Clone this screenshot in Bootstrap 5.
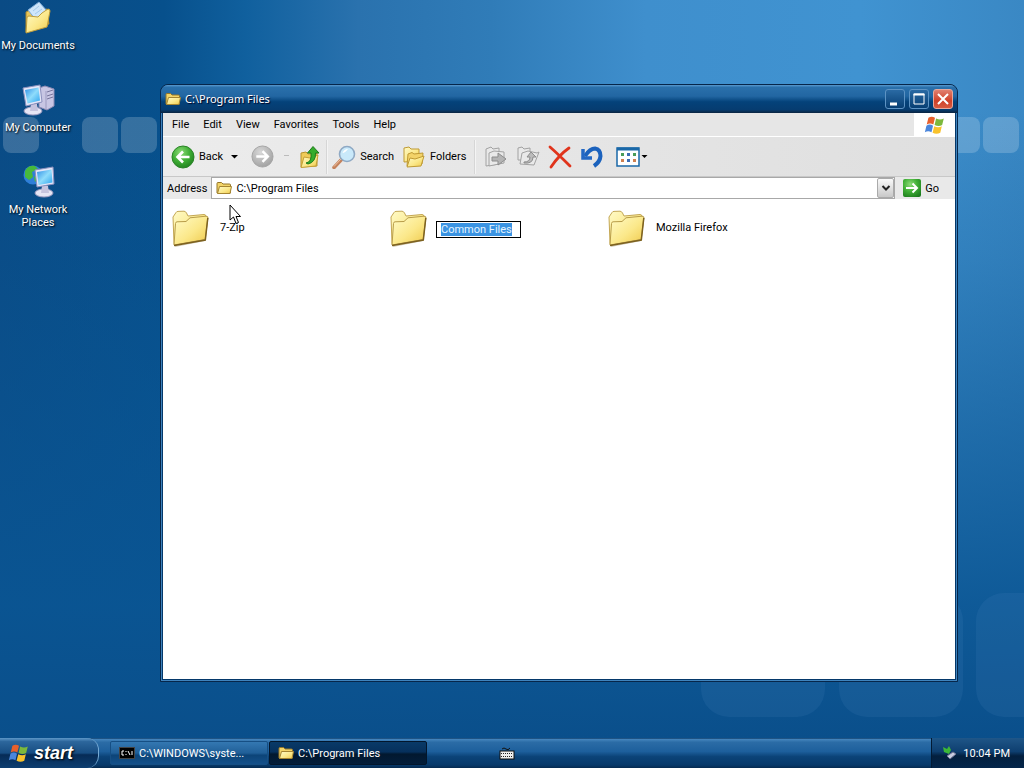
<!DOCTYPE html>
<html lang="en">
<head>
<meta charset="utf-8">
<meta name="viewport" content="width=device-width, initial-scale=1">
<title>C:\Program Files</title>
<link href="https://cdn.jsdelivr.net/npm/bootstrap@5.3.0/dist/css/bootstrap.min.css" rel="stylesheet">
<style>
  body { font: 11px/13px Roboto, "Noto Sans", sans-serif; color: #000; cursor: default; }
  button, input { font: inherit; color: inherit; }
  a { color: inherit; text-decoration: none; }
  svg { display: block; flex: none; }
  .plain { border: 0; background: none; padding: 0; color: inherit; }

  .desktop {
    background:
      linear-gradient(#0a559300 15%, #0a559338 35%, #0a559398 60%, #0a5593e8 82%, #0a4f8b),
      linear-gradient(90deg, #0a4b85, #07508c 16%, #10609e 24%, #2a72ae 35%, #307cb8 48%, #3f8fcd 63%, #4093d1 84%, #3a88c4);
    overflow: hidden;
  }
  .tile { position: absolute; width: 36px; height: 36px; top: 117px; border-radius: 8px; background: #ffffff30; }
  .tile-big { width: 124px; height: 124px; top: auto; bottom: 21px; border-radius: 28px; background: #4a86c028; }
  .shortcuts { width: 76px; position: relative; }
  .shortcut { height: 82px; color: #fff; text-align: center; text-shadow: 1px 1px 2px #000; }
  .shortcut svg { margin-bottom: 4px; }

  .win { position: absolute; left: 160px; top: 84px; right: 66px; bottom: 56px; border-radius: 8px 8px 0 0;
    background: #04386a; border: 1px solid #06264a; padding: 0 2px 2px; box-shadow: inset 0 0 0 1px #3f83bd; }
  .titlebar { height: 28px; margin: 0 -2px; padding: 0 4px; border-radius: 7px 7px 0 0; color: #fff;
    background: linear-gradient(#5a9bd0 0, #2a70ab 8%, #2266a2 40%, #04427a 60%, #063c70 88%, #0a2440); }
  .titlebar h1 { font: 11px/14px "Noto Sans", sans-serif; text-shadow: 1px 1px 1px #002; }
  .capbtn { width: 20px; height: 20px; border: 1px solid #5d93c4; border-radius: 3px; background: linear-gradient(#2a6aa4, #073f74); padding: 0; }
  .capbtn.shut { background: linear-gradient(#e08070, #d04028 60%, #d85a40); border-color: #e8a89c; }
  .menubar { height: 23px; background: #e6e6e6; padding-left: 2px; }
  .menubar a { padding: 0 7px; }
  .flagbox { width: 41px; background: #fff; }
  .toolbar { height: 41px; background: linear-gradient(90deg, #ececec, #dfdfdf); border-top: 1px solid #fff; border-bottom: 1px solid #c8c8c8; }
  .rule { width: 1px; height: 34px; background: #d6d6d6; border-right: 1px solid #f4f4f4; box-sizing: content-box; }
  .addr { height: 22px; background: #e9e9e9; }
  .addrfield { height: 22px; background: #fff; border: 1px solid #a8a8a8; }
  .drop { width: 17px; height: 20px; border: 1px solid #aaa; border-radius: 2px; background: linear-gradient(#fafafa, #c8c8c8); }
  .files { display: grid; grid-template-columns: repeat(auto-fill, 218px); align-content: start; padding: 8px; background: #fff; }
  .files li { height: 44px; gap: 9px; }
  .files span { padding-bottom: 3px; }
  .rename { width: 85px; height: 17px; border: 1px solid #000; border-radius: 0; padding: 0 4px; margin-left: -2px; color: #000; background: #fff; outline: 0; }
  .rename::selection { background: #3a93e2; color: #e4f4ff; }
  .pointer { position: absolute; left: 229px; top: 204px; }

  .taskbar { height: 30px; color: #fff; background: linear-gradient(#03305c 0, #4585bd 4%, #2b6ca6 14%, #1d5f9c 45%, #0b4378 62%, #07396a 90%, #052a50); }
  .start { width: 99px; border-radius: 0 12px 12px 0; border-right: 1px solid #75a9d4; font: italic bold 18px/20px "Liberation Sans", sans-serif;
    background: linear-gradient(#5d97c8 0, #2c669c 12%, #174d82 50%, #062b56 56%, #0d3e70); text-shadow: 1px 1px 2px #000; }
  .tasks { padding-left: 11px; gap: 1px; }
  .task { width: 158px; height: 24px; border: 1px solid #164f84; border-radius: 2px; background: linear-gradient(#3478b2, #205f98 50%, #0c4478 60%, #14508a); padding: 0 8px; }
  .task.on { background: linear-gradient(#093a68, #06305c 45%, #02182f 55%, #031d3a); border-color: #02162c; }
  .tray { width: 93px; padding: 0 14px 0 10px; background: linear-gradient(#1f5688, #0e3f70 45%, #031f3e 60%, #04254a); border-left: 1px solid #021a34; }
</style>
</head>
<body class="d-flex flex-column vh-100 overflow-hidden">
<svg width="0" height="0" class="position-absolute" aria-hidden="true">
  <defs>
    <linearGradient id="gold" x1="0" y1="0" x2="1" y2="1"><stop offset="0" stop-color="#fffbc8"/><stop offset=".55" stop-color="#fbe88a"/><stop offset="1" stop-color="#efc94a"/></linearGradient>
    <linearGradient id="scr" x1="0" y1="0" x2="1" y2="1"><stop offset="0" stop-color="#2f8fe6"/><stop offset=".5" stop-color="#8fdcfb"/><stop offset="1" stop-color="#2ea4ee"/></linearGradient>
    <radialGradient id="green" cx=".4" cy=".3" r=".8"><stop offset="0" stop-color="#8edb78"/><stop offset=".5" stop-color="#3fae35"/><stop offset="1" stop-color="#1c7a1c"/></radialGradient>
    <radialGradient id="grey" cx=".4" cy=".3" r=".8"><stop offset="0" stop-color="#d8d8d8"/><stop offset="1" stop-color="#9c9c9c"/></radialGradient>
    <symbol id="folder" viewBox="0 0 40 40">
      <path d="M3 8 6 3.500 14 3 17 7.500 33 6 37.500 8 34 32 4 38Z" fill="#6b5418" opacity=".3"/>
      <path d="M2 8 5 3.500Q5.500 2.500 7 2.400L13 2.200Q14.500 2.200 15.500 4L17 7 33 5.500Q35 5.500 35 7.500L33 29 4 36Q3 36 3 34Z" fill="url(#gold)" stroke="#c4a754"/>
      <path d="M3 36 4.500 14.500Q4.600 13 6 12.800L15 12.500 19 8.800 35 7.200Q37 7 36.800 9L34.200 30.500Z" fill="url(#gold)" stroke="#b89c48"/>
      <path d="M3 36.500 34.300 31 36.800 9" fill="none" stroke="#7d6220" stroke-width="1.500"/>
    </symbol>
    <symbol id="minifolder" viewBox="0 0 16 14">
      <path d="M1 12V2.500Q1 1.500 2 1.500H5.500L7 3H13.500Q14.500 3 14.500 4V12Z" fill="#f3d468" stroke="#94762a"/>
      <path d="M1.500 12.500 3.500 5.500H15.500L14 12.500Z" fill="url(#gold)" stroke="#a58532"/>
    </symbol>
    <symbol id="flag" viewBox="0 0 20 20">
      <path d="M4 3.500Q7 1.500 10 3.500L8.500 9.500Q5.500 7.600 2.500 9.500Z" fill="#e8602c"/>
      <path d="M11 4Q14.500 6 18 4L16.500 10Q13.500 12 9.600 10Z" fill="#7cb83c"/>
      <path d="M2.200 10.600Q5.200 8.700 8.200 10.600L6.800 16.600Q3.800 14.700.8 16.600Z" fill="#4a86dc"/>
      <path d="M9.300 11.100Q13 13 16.200 11.100L14.800 17.100Q11.400 19 7.800 17.100Z" fill="#f8c22c"/>
    </symbol>
  </defs>
</svg>

<main class="desktop position-relative flex-grow-1">
  <div class="tile" style="left:3px"></div>
  <div class="tile" style="left:82px"></div>
  <div class="tile" style="left:121px"></div>
  <div class="tile" style="right:44px"></div>
  <div class="tile" style="right:5px"></div>
  <div class="tile tile-big" style="right:199px"></div>
  <div class="tile tile-big" style="right:61px"></div>
  <div class="tile tile-big" style="right:-76px"></div>

  <nav class="shortcuts">
    <a href="#" class="shortcut d-flex flex-column align-items-center">
      <svg width="36" height="35" viewBox="0 0 36 35"><path d="M6 32V12L10 10 13 12 27 9 29 24Z" fill="#e9c659" stroke="#a8862e"/><path d="M8 10 19 2 28 12 19 24Z" fill="#cfe6fa" stroke="#7ba9d6"/><path d="M13 11 19 6M15 14 22 9M18 17 26 12" stroke="#a6caea"/><path d="M6 33 7 18Q7 16 9 16L18 17 22 13 28 9Q30 9 30 11L27 27Z" fill="url(#gold)" stroke="#c09e3c"/></svg>
      <span>My Documents</span></a>
    <a href="#" class="shortcut d-flex flex-column align-items-center">
      <svg width="36" height="35" viewBox="0 0 36 35"><path d="M19 6 25 4 34 7V24L27 28 19 25Z" fill="#c8c6e4" stroke="#8c8ab4"/><path d="M27 10 33 8M27 14 33 12M27 17 33 15" stroke="#77749c"/><path d="M26 9V27" stroke="#9c9ac0"/><ellipse cx="13" cy="29" rx="9" ry="4" fill="#e6e5f4" stroke="#9c9abf"/><path d="M11 22H17L18 29H10Z" fill="#c6c4de"/><path d="M3 6 20 3 22 20 6 24Z" fill="#e4e6f8" stroke="#8b90bd"/><path d="M5 8 18.500 5.500 20 18.500 7.500 21.500Z" fill="url(#scr)"/></svg>
      <span>My Computer</span></a>
    <a href="#" class="shortcut d-flex flex-column align-items-center">
      <svg width="36" height="35" viewBox="0 0 36 35"><circle cx="13" cy="11" r="9.500" fill="#2f7fd8"/><path d="M5 7Q8 1 15 2L18 5 12 8 13 13 9 16 5 13ZM14 13 20 9 21 12 15 18Z" fill="#47b93c"/><ellipse cx="24" cy="29" rx="9" ry="4" fill="#e6e5f4" stroke="#9c9abf"/><path d="M22 22H28L29 29H21Z" fill="#c6c4de"/><path d="M15 6 33 3 34 20 17 23Z" fill="#e4e6f8" stroke="#8b90bd"/><path d="M17 8 31.500 5.500 32.500 18.500 18.500 21Z" fill="url(#scr)"/></svg>
      <span>My Network<br>Places</span></a>
  </nav>

  <section class="win d-flex flex-column">
    <header class="titlebar d-flex align-items-center gap-1">
      <svg width="16" height="14"><use href="#minifolder"/></svg>
      <h1 class="m-0 me-auto">C:\Program Files</h1>
      <button class="capbtn" aria-label="Minimize"><svg width="18" height="18"><path d="M4 14H11" stroke="#fff" stroke-width="3"/></svg></button>
      <button class="capbtn" aria-label="Maximize"><svg width="18" height="18"><path d="M4 4H14V14H4Z" fill="none" stroke="#fff"/><path d="M3.500 4.500H14.500" stroke="#fff" stroke-width="2"/></svg></button>
      <button class="capbtn shut" aria-label="Close"><svg width="18" height="18"><path d="M4 4 14 14M14 4 4 14" stroke="#fff" stroke-width="2"/></svg></button>
    </header>
    <nav class="menubar d-flex">
      <div class="d-flex align-items-center flex-grow-1">
        <a href="#">File</a><a href="#">Edit</a><a href="#">View</a><a href="#">Favorites</a><a href="#">Tools</a><a href="#">Help</a>
      </div>
      <div class="flagbox d-flex align-items-center justify-content-center"><svg width="22" height="22"><use href="#flag"/></svg></div>
    </nav>
    <div class="toolbar d-flex align-items-center">
      <div class="d-flex align-items-center ps-2">
        <button class="plain d-flex align-items-center gap-1"><svg width="24" height="24" viewBox="0 0 24 24"><circle cx="12" cy="12" r="11" fill="url(#green)" stroke="#2b8428"/><path d="M18.500 12H7M12 6.500 6.500 12 12 17.500" fill="none" stroke="#fff" stroke-width="2.600"/></svg>Back</button>
        <button class="plain ms-2" aria-label="Back history"><svg width="8" height="5"><path d="M0 1H7L3.500 4.500Z"/></svg></button>
        <button class="plain ms-2" aria-label="Forward"><svg class="ms-1" width="23" height="23" viewBox="0 0 24 24"><circle cx="12" cy="12" r="11" fill="url(#grey)" stroke="#a4a4a4"/><path d="M5.500 12H17M12 6.500 17.500 12 12 17.500" fill="none" stroke="#fff" stroke-width="2.600"/></svg></button>
        <svg class="ms-2" width="8" height="5"><path d="M2 1.500H7" stroke="#bbb"/></svg>
        <button class="plain ms-2" aria-label="Up"><svg width="24" height="24" viewBox="0 0 24 24"><path d="M3 22V8L8 7 10 9 19 8V21Z" fill="#efcb58" stroke="#b8932e"/><path d="M3 22.500 6 12 12 13 20 10 18 21Z" fill="url(#gold)" stroke="#c49f36"/><path d="M8 18Q14 17 13 8H9.500L15 1.500 21 8H17.500Q18 17 10 19Z" fill="#35ac2c" stroke="#1d7c1b"/></svg></button>
      </div>
      <div class="rule mx-1"></div>
      <button class="plain d-flex align-items-center gap-1"><svg width="24" height="24" viewBox="0 0 24 24"><path d="M2 22.500 10 14" stroke="#c4825c" stroke-width="3.500" stroke-linecap="round"/><path d="M2 21.500 9 14" stroke="#f0c4a4"/><circle cx="15" cy="9" r="7.500" fill="#c9e9fa" stroke="#8fa9c4" stroke-width="1.600"/><path d="M10.500 8Q12 4 16 4Q13 8 10.500 8Z" fill="#fff"/></svg>Search</button>
      <button class="plain d-flex align-items-center gap-1 ms-2"><svg width="24" height="24" viewBox="0 0 24 24"><path d="M2 17V3L7 2 9 4 17 4V16Z" fill="url(#gold)" stroke="#bf9a34"/><path d="M5 21 6 9 10 7.500 12 9 21 8 20 19Z" fill="#f3d368" stroke="#bf9a34"/><path d="M5 22 8 13 13 14 22 11 19 21Z" fill="url(#gold)" stroke="#bf9a34"/></svg>Folders</button>
      <div class="rule ms-2"></div>
      <div class="d-flex align-items-center gap-2 ps-2">
        <button class="plain" aria-label="Move to"><svg width="24" height="24" viewBox="0 0 24 24"><g fill="#e9e9e9" stroke="#a2a2a2"><path d="M2 21V4L7 2 9 4 15 3V19Z"/><path d="M5 21V8L10 6 20 7V18Z"/><path d="M8 12H14V8L22 14 14 20V16H8Z" fill="#b4b4b4" stroke="#8c8c8c"/></g></svg></button>
        <button class="plain" aria-label="Copy to"><svg width="24" height="24" viewBox="0 0 24 24"><g fill="#e9e9e9" stroke="#a2a2a2"><path d="M2 15V3L6 2 8 4 14 3V15Z"/><path d="M4 19 6 8 12 6 21 8 23 7 18 20Z"/><path d="M8 17Q14 17 14 12H11L15 7 20 12H17Q17 19 8 18Z" fill="#bbb" stroke="#8c8c8c"/></g></svg></button>
        <button class="plain" aria-label="Delete"><svg width="24" height="24" viewBox="0 0 24 24"><path d="M2 2Q10 9 22 21M21 3Q11 10 3 22" fill="none" stroke="#e0341c" stroke-width="2.800" stroke-linecap="round"/></svg></button>
        <button class="plain" aria-label="Undo"><svg width="24" height="24" viewBox="0 0 24 24"><path d="M5 11Q10 3.500 15 3.500Q20.500 4.500 20.500 11Q20 17 14 21" fill="none" stroke="#1b62bd" stroke-width="4"/><path d="M3 4V13H12" fill="none" stroke="#2368c4" stroke-width="3.500"/></svg></button>
        <button class="plain d-flex align-items-center" aria-label="Views"><svg class="ms-1" width="24" height="20" viewBox="0 0 24 20"><path d="M1 1H23V19H1Z" fill="#fff" stroke="#1a68a8" stroke-width="1.500"/><path d="M1 2H23" stroke="#1a68a8" stroke-width="3"/><path d="M5 6H8V9H5ZM17 6H20V9H17Z" fill="#4a9c58"/><path d="M11 6H14V9H11ZM11 12H14V15H11Z" fill="#3c6cb4"/><path d="M5 12H8V15H5ZM17 12H20V15H17Z" fill="#cf8050"/></svg><svg width="9" height="5"><path d="M1.500 1H7.500L4.500 4Z"/></svg></button>
      </div>
    </div>
    <form class="addr d-flex align-items-center">
      <label for="path" class="px-1">Address</label>
      <div class="addrfield d-flex align-items-center flex-grow-1">
        <svg class="mx-1" width="16" height="14"><use href="#minifolder"/></svg>
        <input id="path" class="plain flex-grow-1" value="C:\Program Files">
        <button type="button" class="drop p-0 d-flex align-items-center justify-content-center" aria-label="Show addresses"><svg width="10" height="8"><path d="M1.500 2 5 5.500 8.500 2" fill="none" stroke="#222" stroke-width="2"/></svg></button>
      </div>
      <button type="button" class="plain d-flex align-items-center gap-1 ms-1 me-3"><svg class="ms-1" width="18" height="18" viewBox="0 0 18 18"><rect width="18" height="18" rx="2" fill="url(#green)"/><path d="M3 9H14M9.500 4.500 14 9 9.500 13.500" fill="none" stroke="#fff" stroke-width="2"/></svg>Go</button>
    </form>
    <ul class="files list-unstyled m-0 flex-grow-1">
      <li class="d-flex align-items-center"><svg width="40" height="40"><use href="#folder"/></svg><span>7-Zip</span></li>
      <li class="d-flex align-items-center"><svg width="40" height="40"><use href="#folder"/></svg><input class="rename" aria-label="Folder name" value="Common Files"></li>
      <li class="d-flex align-items-center"><svg width="40" height="40"><use href="#folder"/></svg><span>Mozilla Firefox</span></li>
    </ul>
  </section>
  <svg class="pointer" width="14" height="22" viewBox="0 0 14 22"><path d="M1 1V16L4.500 13 7 19.500 9.500 18.500 7 12.500H11.500Z" fill="#fff" stroke="#000"/></svg>
</main>

<footer class="taskbar d-flex align-items-center">
  <button class="start plain align-self-stretch d-flex align-items-center gap-1 ps-2 text-white"><svg width="22" height="22"><use href="#flag"/></svg>start</button>
  <div class="tasks d-flex">
    <button class="task d-flex align-items-center gap-1 text-white"><svg width="16" height="12" viewBox="0 0 16 12"><rect x=".5" y=".5" width="15" height="11" fill="#000" stroke="#444"/><path d="M5 4H3V8H5M7 4V5M7 7V8M9 4 11 8M13 4V8" fill="none" stroke="#fff"/></svg>C:\WINDOWS\syste...</button>
    <button class="task on d-flex align-items-center gap-1 text-white"><svg width="16" height="14"><use href="#minifolder"/></svg>C:\Program Files</button>
  </div>
  <div class="flex-grow-1 ps-5"><svg class="ms-4" width="16" height="14" viewBox="0 0 16 14"><path d="M3 3Q5 1 7 3T11 2" fill="none" stroke="#111"/><rect x="1" y="5" width="14" height="8" fill="#eee" stroke="#111"/><path d="M2 7.500H14M2 10.500H14" stroke="#222" stroke-dasharray="1 1"/></svg></div>
  <div class="tray align-self-stretch d-flex align-items-center justify-content-between"><svg width="16" height="16" viewBox="0 0 16 16"><path d="M1 2 5 4 7 1 9 5 7 9 2 7Z" fill="#3cb838"/><path d="M5 11 11 7 14 9 8 14Z" fill="#c8cce0" stroke="#6b7090"/></svg><time>10:04 PM</time></div>
</footer>
<script src="https://cdn.jsdelivr.net/npm/bootstrap@5.3.0/dist/js/bootstrap.bundle.min.js"></script>
<script>
  const nameBox = document.querySelector('.rename');
  nameBox.focus();
  nameBox.select();
</script>
</body>
</html>
